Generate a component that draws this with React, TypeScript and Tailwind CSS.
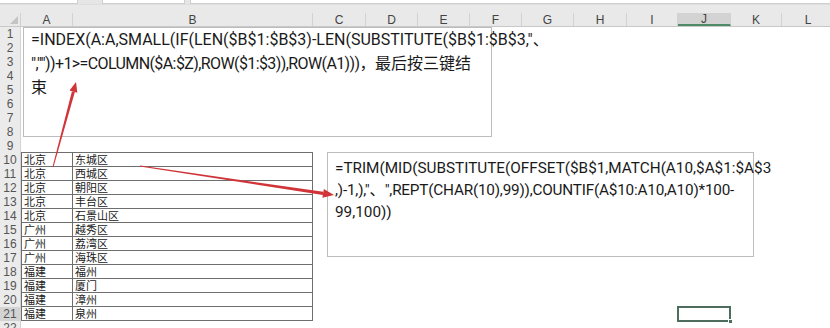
import React from "react";

const COLS = ["A", "B", "C", "D", "E", "F", "G", "H", "I", "J", "K", "L"];
const WIDTHS = [52, 240, 53, 52, 52, 52, 52, 53, 51, 53, 51, 53];

const DATA: Record<number, [string, string]> = {
  10: ["北京", "东城区"],
  11: ["北京", "西城区"],
  12: ["北京", "朝阳区"],
  13: ["北京", "丰台区"],
  14: ["北京", "石景山区"],
  15: ["广州", "越秀区"],
  16: ["广州", "荔湾区"],
  17: ["广州", "海珠区"],
  18: ["福建", "福州"],
  19: ["福建", "厦门"],
  20: ["福建", "漳州"],
  21: ["福建", "泉州"],
};

const cjk = { fontFamily: '"Noto Sans CJK SC", "Noto Sans", sans-serif' };
const boxFont = { fontFamily: 'Roboto, "Noto Sans CJK SC", sans-serif' };

function Row({ n }: { n: number }) {
  const d = DATA[n];
  const inTable = !!d;
  const above = n === 9;
  return (
    <div className="flex h-[14px]">
      <div
        className={`w-[21px] shrink-0 flex items-center justify-center text-[12px] leading-none text-[#555] border-r border-[#d4d4d4] ${
          n === 21 ? "bg-[#d3d3d3]" : "bg-[#ebebeb]"
        }`}
        style={{ fontFamily: '"Liberation Sans", sans-serif' }}
      >
        {n}
      </div>
      {WIDTHS.map((w, i) => {
        let cls = "shrink-0 flex items-center overflow-visible whitespace-nowrap text-[11px] leading-none text-[#222]";
        if (inTable && i === 0) cls += " border-l border-r border-b border-[#6e6e6e] pl-[2px]";
        if (inTable && i === 1) cls += " border-r border-b border-[#6e6e6e] pl-[2px]";
        if (above && (i === 0 || i === 1)) cls += " border-b border-[#6e6e6e]";
        return (
          <div key={i} className={cls} style={{ width: w, ...cjk }}>
            {inTable && i < 2 ? d[i] : null}
          </div>
        );
      })}
    </div>
  );
}

export default function App() {
  const rows = Array.from({ length: 22 }, (_, i) => i + 1);
  return (
    <div className="relative w-[830px] h-[328px] overflow-hidden bg-white">
      {/* toolbar remnants */}
      <div className="flex h-[4px] bg-[#e6e6e6]">
        <div className="w-[78px] bg-white border-b border-r border-[#cfcfcf]" />
        <div className="w-[24px]" />
        <div className="w-[83px] bg-white border-b border-x border-[#cfcfcf]" />
        <div className="w-[5px]" />
        <div className="flex-1 bg-white border-b border-l border-[#cfcfcf]" />
      </div>
      <div className="h-[9px] bg-[#e9e9e9] border-t border-[#dedede]" />
      {/* column header */}
      <div className="flex h-[14px] bg-[#e9e9e9] border-b border-[#c8c8c8]">
        <div className="relative w-[21px] shrink-0 border-r border-[#d0d0d0]">
          <div className="absolute right-[2px] bottom-[2px] w-0 h-0 border-l-[8px] border-l-transparent border-b-[8px] border-b-[#c4c4c4]" />
        </div>
        {COLS.map((c, i) => (
          <div
            key={c}
            className={`shrink-0 flex items-center justify-center text-[12px] leading-none text-[#444] border-r border-[#d2d2d2] ${
              c === "J" ? "bg-[#d3d3d3] border-b-2 border-b-[#4f8a67]" : ""
            }`}
            style={{ width: WIDTHS[i], fontFamily: '"Liberation Sans", sans-serif' }}
          >
            {c}
          </div>
        ))}
      </div>
      {rows.map((n) => (
        <Row key={n} n={n} />
      ))}

      {/* selected cell J21 */}
      <div className="absolute left-[677px] top-[306px] w-[54px] h-[16px] border-2 border-[#4d6e5c]">
        <div className="absolute right-[-4px] bottom-[-4px] w-[5px] h-[5px] bg-[#4d6e5c] border border-white" />
      </div>

      {/* text box 1 */}
      <div
        className="absolute left-[23px] top-[27px] w-[469px] h-[110px] bg-white border border-[#bdbdbd] pl-[7px] text-[16px] leading-[24px] text-[#1a1a1a] whitespace-nowrap"
        style={boxFont}
      >
        <div>=INDEX(A:A,SMALL(IF(LEN($B$1:$B$3)-LEN(SUBSTITUTE($B$1:$B$3,"、</div>
        <div className="tracking-[-0.6px]">
          ",""))+1&gt;=COLUMN($A:$Z),ROW($1:$3)),ROW(A1)))，<span className="tracking-[0px]">最后按三键结</span>
        </div>
        <div>束</div>
      </div>

      {/* text box 2 */}
      <div
        className="absolute left-[327px] top-[152px] w-[427px] h-[105px] bg-white border border-[#bdbdbd] pl-[7px] pt-[4px] text-[15.3px] leading-[22px] text-[#1a1a1a] whitespace-nowrap"
        style={boxFont}
      >
        <div>=TRIM(MID(SUBSTITUTE(OFFSET($B$1,MATCH(A10,$A$1:$A$3</div>
        <div className="tracking-[-0.2px]">,)-1,),"、",REPT(CHAR(10),99)),COUNTIF(A$10:A10,A10)*100-</div>
        <div>99,100))</div>
      </div>

      {/* arrows */}
      <svg className="absolute left-0 top-0 pointer-events-none" width="830" height="328" viewBox="0 0 830 328">
        <polygon
          points="52.5,167.1 53.5,166.9 74.85,92.04 73.4,91.65 71.95,91.26"
          fill="#d13438"
        />
        <polygon points="76,82 77.3,92.7 69.5,90.6" fill="#d13438" />
        <polygon
          points="140.06,165.6 139.94,166.4 322.86,194.98 323.1,193.4 323.34,191.82"
          fill="#d13438"
        />
        <polygon points="334,195 322.4,197.85 323.8,188.95" fill="#d13438" />
      </svg>
    </div>
  );
}
